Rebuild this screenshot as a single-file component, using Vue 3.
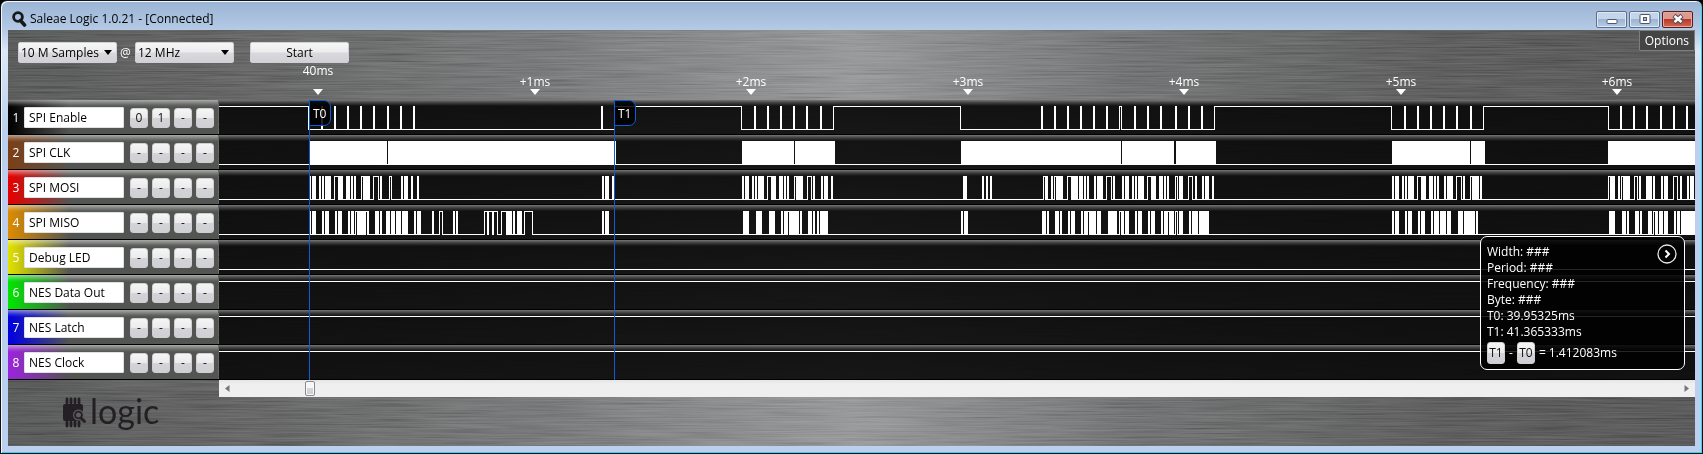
<script setup>
import { ref } from 'vue'

const depth = ref('10 M Samples')
const rate = ref('12 MHz')
const scroll = ref(69)

// Horizontal positions are measured from the window edge; the plots start here.
const ORIGIN = 219
const END = 2600

const ticks = ['40ms', '+1ms', '+2ms', '+3ms', '+4ms', '+5ms', '+6ms'].map((label, i) => ({
  label,
  x: Math.round(318 + i * 216.5) - ORIGIN
}))

const cursors = [
  { label: 'T0', x: 309 - ORIGIN },
  { label: 'T1', x: 614 - ORIGIN }
]

const pulses = (xs) => xs.map((x) => [x, 2])

// high: stretches drawn as an outline; fill: stretches too dense to resolve.
const channels = ref([
  {
    name: 'SPI Enable', color: '#000000', keys: ['0', '1', '-', '-'],
    high: [[ORIGIN - 2, 309], [614, 742], [833, 961], [1119, 1122], [1214, 1392], [1483, 1609]],
    fill: pulses([321, 334, 347, 360, 373, 387, 400, 413, 601, 754, 767, 780, 793, 806, 820,
      1041, 1054, 1067, 1080, 1093, 1106, 1134, 1147, 1160, 1175, 1188, 1201,
      1404, 1417, 1430, 1443, 1456, 1470, 1620, 1633, 1646, 1660, 1673, 1686])
  },
  {
    name: 'SPI CLK', color: '#7c3f16', keys: ['-', '-', '-', '-'], high: [],
    fill: [[309, 78], [388, 228], [742, 52], [795, 40], [961, 160], [1122, 52], [1176, 40],
      [1392, 78], [1471, 14], [1608, 87]]
  },
  {
    name: 'SPI MOSI', color: '#e60000', keys: ['-', '-', '-', '-'],
    high: [[334, 339], [361, 364], [373, 379], [389, 392], [767, 772], [794, 797], [807, 812],
      [1043, 1046], [1054, 1057], [1067, 1072], [1106, 1112], [1147, 1152], [1175, 1178],
      [1188, 1193], [1417, 1422], [1456, 1462], [1470, 1473], [1608, 1611], [1621, 1624],
      [1634, 1638], [1673, 1678]],
    fill: [[310, 1], [312, 4], [319, 2], [322, 2], [325, 6], [338, 5], [346, 4], [351, 2], [354, 2],
      [363, 7], [380, 2], [401, 2], [404, 4], [411, 2], [417, 2], [602, 2], [605, 4], [612, 2],
      [742, 2], [745, 4], [752, 2], [755, 2], [758, 6], [771, 5], [779, 4], [784, 2], [787, 2],
      [796, 7], [813, 2], [821, 2], [824, 4], [831, 2], [963, 4], [982, 2], [986, 2], [990, 2],
      [1045, 3], [1051, 2], [1056, 7], [1071, 7], [1079, 4], [1084, 2], [1087, 2], [1094, 2],
      [1097, 6], [1113, 2], [1122, 2], [1125, 4], [1132, 2], [1135, 2], [1138, 6], [1151, 5],
      [1159, 4], [1164, 2], [1167, 2], [1179, 4], [1195, 2], [1202, 2], [1205, 4], [1212, 2],
      [1392, 2], [1395, 4], [1402, 2], [1405, 2], [1408, 6], [1421, 5], [1429, 4], [1434, 2],
      [1437, 2], [1444, 2], [1447, 6], [1463, 2], [1472, 7], [1480, 2], [1610, 5], [1618, 2],
      [1623, 7], [1639, 2], [1646, 6], [1653, 2], [1661, 2], [1664, 4], [1680, 2], [1687, 2],
      [1690, 4]]
  },
  {
    name: 'SPI MISO', color: '#dc8c00', keys: ['-', '-', '-', '-'],
    high: [[355, 358], [365, 369], [396, 398], [439, 443], [484, 488], [487, 493], [492, 498],
      [501, 507], [524, 533], [787, 790], [795, 797], [1087, 1090], [1113, 1115], [1119, 1122],
      [1167, 1170], [1175, 1178], [1437, 1439], [1653, 1656]],
    fill: [[310, 1], [312, 4], [322, 2], [325, 4], [335, 2], [338, 4], [348, 2], [351, 3], [358, 8],
      [367, 2], [375, 4], [380, 2], [386, 4], [391, 4], [398, 3], [402, 6], [414, 2], [417, 4],
      [432, 2], [453, 2], [456, 2], [487, 2], [492, 2], [506, 6], [513, 2], [517, 5], [602, 2],
      [605, 4], [743, 6], [756, 6], [769, 6], [781, 2], [784, 3], [789, 6], [796, 3], [800, 2],
      [808, 4], [813, 2], [817, 2], [820, 8], [961, 2], [964, 4], [1042, 4], [1047, 2],
      [1055, 4], [1060, 2], [1068, 2], [1071, 4], [1081, 2], [1084, 3], [1090, 6], [1097, 4],
      [1108, 5], [1114, 3], [1122, 2], [1125, 4], [1135, 2], [1138, 4], [1148, 2], [1151, 4],
      [1161, 2], [1164, 3], [1170, 4], [1179, 4], [1189, 2], [1192, 6], [1199, 10], [1392, 2],
      [1395, 4], [1405, 2], [1408, 4], [1418, 2], [1421, 4], [1431, 2], [1434, 3], [1440, 6],
      [1447, 4], [1458, 5], [1464, 11], [1476, 2], [1609, 6], [1622, 4], [1627, 2], [1635, 4],
      [1640, 2], [1648, 4], [1655, 3], [1659, 4], [1664, 4], [1674, 2], [1677, 3], [1681, 14]]
  },
  { name: 'Debug LED', color: '#e1e100', keys: ['-', '-', '-', '-'], high: [], fill: [] },
  { name: 'NES Data Out', color: '#00e600', keys: ['-', '-', '-', '-'], high: [[ORIGIN - 2, END]], fill: [] },
  { name: 'NES Latch', color: '#0000e1', keys: ['-', '-', '-', '-'], high: [[ORIGIN - 2, END]], fill: [] },
  { name: 'NES Clock', color: '#9b23dc', keys: ['-', '-', '-', '-'], high: [[ORIGIN - 2, END]], fill: [] }
])

const TOP = 6
const LOW = 29

function trace(high) {
  let d = `M${ORIGIN - 4} ${LOW}.5`
  for (const [a, b] of [...high].sort((p, q) => p[0] - q[0])) {
    d += `H${a}.5V${TOP}.5H${b - 1}.5V${LOW}.5`
  }
  return `${d}H${END}`
}

const measurements = [
  'Width: ###', 'Period: ###', 'Frequency: ###', 'Byte: ###', 'T0: 39.95325ms', 'T1: 41.365333ms'
]
</script>

<template>
  <div class="window">
    <header class="titlebar">
      <svg class="app-icon" width="15" height="16" viewBox="0 0 15 16" aria-hidden="true">
        <circle cx="6" cy="6" r="4.4" fill="none" stroke="#17191c" stroke-width="2.8" />
        <path d="M8.5 9.5l4 4.5" stroke="#17191c" stroke-width="3.6" stroke-linecap="round" />
      </svg>
      <h1>Saleae Logic 1.0.21 - [Connected]</h1>
      <div class="window-buttons">
        <button type="button" aria-label="Minimize">
          <svg width="12" height="12" viewBox="0 0 12 12"><rect x="1" y="6.5" width="10" height="4" rx="1" fill="#fff" stroke="#50586a" /></svg>
        </button>
        <button type="button" aria-label="Maximize">
          <svg width="12" height="12" viewBox="0 0 12 12"><rect x="1" y="1.5" width="10" height="9" rx="1" fill="#fff" stroke="#50586a" /><rect x="4.5" y="4.5" width="3" height="3" fill="#9db8d8" stroke="#50586a" /></svg>
        </button>
        <button type="button" class="close" aria-label="Close">
          <svg width="14" height="12" viewBox="0 0 14 12"><path d="M3 2.5l8 7M11 2.5l-8 7" stroke="#4a4c5c" stroke-width="4.6" /><path d="M3.5 3l7 6M10.5 3l-7 6" stroke="#fff" stroke-width="2.6" /></svg>
        </button>
      </div>
    </header>

    <main class="client">
      <svg class="metal" aria-hidden="true">
        <filter id="brushed" x="0" y="0" width="100%" height="100%">
          <feTurbulence type="fractalNoise" baseFrequency="0.012 0.7" numOctaves="3" seed="8" />
          <feColorMatrix values="1 0 0 0 0  1 0 0 0 0  1 0 0 0 0  0 0 0 0 1" />
        </filter>
        <rect width="100%" height="100%" filter="url(#brushed)" />
      </svg>

      <div class="toolbar">
        <form class="capture" @submit.prevent>
          <span class="pick">
            <select v-model="depth" aria-label="Sample count">
              <option>10 M Samples</option>
              <option>25 M Samples</option>
            </select>
          </span>
          <span class="at">@</span>
          <span class="pick">
            <select v-model="rate" aria-label="Sample rate">
              <option>12 MHz</option>
              <option>24 MHz</option>
            </select>
          </span>
          <button class="start" type="submit">Start</button>
        </form>
        <button class="options" type="button">Options</button>
      </div>

      <div class="ruler">
        <div
          v-for="(t, i) in ticks"
          :key="t.label"
          class="tick"
          :class="{ major: i === 0 }"
          :style="{ left: t.x + 'px' }"
        >
          <span>{{ t.label }}</span><i></i>
        </div>
      </div>

      <section class="channels">
        <div v-for="(c, i) in channels" :key="i" class="channel">
          <div class="label">
            <svg class="tint" aria-hidden="true">
              <defs>
                <linearGradient :id="'tint' + i">
                  <stop offset="0" :stop-color="c.color" />
                  <stop offset="0.12" :stop-color="c.color" stop-opacity="0.9" />
                  <stop offset="1" :stop-color="c.color" stop-opacity="0" />
                </linearGradient>
              </defs>
              <rect width="62" height="100%" :fill="`url(#tint${i})`" />
            </svg>
            <label :for="'name' + i">{{ i + 1 }}</label>
            <input :id="'name' + i" v-model="c.name" type="text">
            <div class="keys">
              <button v-for="(k, j) in c.keys" :key="j" type="button">{{ k }}</button>
            </div>
          </div>
          <svg class="plot" :aria-label="c.name">
            <g :transform="`translate(${-ORIGIN} 0)`" shape-rendering="crispEdges">
              <path :d="trace(c.high)" fill="none" stroke="#fff" />
              <rect v-for="[x, w] in c.fill" :key="x" :x="x" :y="TOP" :width="w" :height="LOW - TOP + 1" fill="#fff" />
            </g>
          </svg>
        </div>

        <div class="overlay">
          <div v-for="c in cursors" :key="c.label" class="cursor" :style="{ left: c.x + 'px' }">
            <span>{{ c.label }}</span>
          </div>
          <aside class="panel">
            <p v-for="m in measurements" :key="m">{{ m }}</p>
            <div class="delta">
              <button type="button">T1</button><span>-</span><button type="button">T0</button><span>= 1.412083ms</span>
            </div>
            <button class="expand" type="button" aria-label="More measurements">
              <svg width="20" height="20" viewBox="0 0 20 20"><circle cx="10" cy="10" r="9" fill="#000" stroke="#e8e8e8" stroke-width="1.3" /><path d="M8.5 6.5l3.5 3.5-3.5 3.5" fill="none" stroke="#fff" stroke-width="2" /></svg>
            </button>
          </aside>
        </div>
      </section>

      <div class="scrollbar">
        <button type="button" aria-label="Scroll left"><svg width="5" height="7" viewBox="0 0 5 7"><path d="M4.5 0v7L0 3.5z" fill="#77777b" /></svg></button>
        <input v-model="scroll" type="range" min="0" max="1432" aria-label="Timeline position">
        <button type="button" aria-label="Scroll right"><svg width="5" height="7" viewBox="0 0 5 7"><path d="M.5 0v7L5 3.5z" fill="#77777b" /></svg></button>
      </div>

      <footer class="brand">
        <svg width="24" height="31" viewBox="0 0 24 31" aria-hidden="true">
          <path d="M4 2v4M8 2v4M12 2v4M16 2v4M4 25v4M8 25v4M12 25v4M16 25v4" stroke="#231f24" stroke-width="2.8" stroke-linecap="round" />
          <rect x="0" y="7" width="20" height="17" rx="2" fill="#231f24" />
          <path d="M18.5 21l3.5 3.5" stroke="#5c5d5c" stroke-width="5" stroke-linecap="round" />
          <circle cx="15.5" cy="18" r="5.5" fill="#5c5d5c" />
          <circle cx="15.5" cy="18" r="3.4" fill="none" stroke="#231f24" stroke-width="1.8" />
          <path d="M18 21l3.5 3.5" stroke="#231f24" stroke-width="2.8" stroke-linecap="round" />
        </svg>
        <span>logic</span>
      </footer>
    </main>
  </div>
</template>

<style>
body {
  background: #000;
}
</style>

<style scoped>
.window {
  box-sizing: border-box;
  padding: 0 6px 6px;
  border: 1px solid #10141a;
  border-radius: 7px 7px 0 0;
  background: linear-gradient(#9ab4d4, #b5cbe6 30px, #dbe8f7 50px, #bbd0ee 130px);
  box-shadow: inset 1px 1px #f3f8fd, inset -1px -1px #32d6f0;
  font: 12px/16px "Open Sans", "Noto Sans", sans-serif;
  color: #fff;
}
button,
input,
select {
  margin: 0;
  font: inherit;
}
.titlebar {
  display: flex;
  align-items: center;
  height: 29px;
  padding: 0 3px 0 5px;
}
.app-icon {
  margin-top: 6px;
}
h1 {
  flex: 1;
  margin: 6px 0 0 3px;
  font-size: 12px;
  font-weight: 400;
  color: #000;
}
.window-buttons {
  display: flex;
  gap: 2px;
  margin-top: 7px;
}
.window-buttons button {
  display: grid;
  place-items: center;
  box-sizing: border-box;
  width: 31px;
  height: 17px;
  padding: 0;
  border: 1px solid #5a6f8f;
  border-radius: 2px;
  background: linear-gradient(#c4d5ea 45%, #9cb5d3 50%, #b7cce6);
  box-shadow: inset 0 0 0 1px #dfe9f5;
}
.window-buttons .close {
  border-color: #5b1a1e;
  background: linear-gradient(#dd9a8e 45%, #b8392a 50%, #cf6a51);
  box-shadow: inset 0 0 0 1px #e6a99f;
}
.client {
  position: relative;
  overflow: hidden;
  margin: 0 1px 1px;
  background: linear-gradient(90deg, #4d4f4e, #565756 12%, #6d6e6f 32%, #8c8e90 50%, #68696a 66%, #515251 84%, #4c4d4c);
}
.metal {
  position: absolute;
  inset: 0;
  width: 100%;
  height: 100%;
  opacity: 0.5;
  mix-blend-mode: soft-light;
}
.toolbar,
.ruler,
.channels,
.scrollbar,
.brand {
  position: relative;
}
.toolbar {
  display: flex;
  justify-content: space-between;
  align-items: flex-start;
  height: 34px;
}
.capture {
  display: flex;
  align-items: center;
  padding: 12px 0 0 10px;
}
.pick {
  position: relative;
  width: 98px;
}
.pick::after {
  content: "";
  position: absolute;
  right: 4px;
  top: 8px;
  border: 4px solid transparent;
  border-top: 5px solid #000;
  border-bottom: 0;
  pointer-events: none;
}
.pick select,
.start {
  display: block;
  box-sizing: border-box;
  height: 21px;
  border: 1px solid #d0d0d4;
  border-radius: 2px;
  background: linear-gradient(#f6f6f6, #ececee 48%, #d9d9dd 52%, #d2d2d6);
  color: #000;
}
.pick select {
  appearance: none;
  width: 99px;
  padding: 0 0 0 2px;
}
.at {
  width: 19px;
  text-align: center;
}
.start {
  width: 99px;
  margin-left: 17px;
  padding: 0;
}
.options {
  box-sizing: border-box;
  height: 21px;
  padding: 0 5px;
  border: 1px solid #7d7e7d;
  border-radius: 1px;
  background: #434443;
  color: #fff;
}
.ruler {
  height: 36px;
  margin-left: 211px;
}
.tick {
  position: absolute;
  top: 10px;
  width: 60px;
  margin-left: -30px;
  text-align: center;
}
.tick i {
  display: block;
  width: 0;
  margin: -1px auto 0;
  border: 5px solid transparent;
  border-top: 6px solid #fff;
  border-bottom: 0;
}
.tick.major {
  top: -1px;
}
.tick.major i {
  margin-top: 10px;
}
.channel {
  display: flex;
  box-sizing: border-box;
  height: 35px;
  border-bottom: 1px solid #000;
}
.label {
  position: relative;
  display: flex;
  align-items: center;
  box-sizing: border-box;
  width: 210px;
  margin-right: 1px;
  padding-top: 1px;
  background: #535552;
}
.label::after {
  content: "";
  position: absolute;
  inset: 0 0 auto;
  height: 7px;
  background: linear-gradient(rgba(255, 255, 255, 0.5), rgba(255, 255, 255, 0.1) 70%, transparent);
}
.tint {
  position: absolute;
  inset: 0;
  width: 100%;
  height: 100%;
}
.label label {
  position: relative;
  width: 16px;
  text-align: center;
}
.label input {
  position: relative;
  z-index: 1;
  box-sizing: border-box;
  width: 100px;
  height: 21px;
  padding: 0 0 0 4px;
  border: 1px solid #dfe1e4;
  border-radius: 1px;
  background: #fff;
  color: #000;
}
.keys {
  position: relative;
  z-index: 1;
  display: flex;
  gap: 4px;
  margin-left: 6px;
}
.keys button,
.delta button {
  box-sizing: border-box;
  width: 18px;
  height: 20px;
  padding: 0;
  border: 1px solid #cfcfd3;
  border-radius: 3px;
  background: linear-gradient(#f5f5f5, #ebebed 48%, #d4d4d8 52%, #d0d0d4);
  color: #111;
}
.plot {
  flex: 1;
  min-width: 0;
  height: 34px;
  background: linear-gradient(#777, #4c4d4c 2px, #2c2d2c 4px, rgba(8, 9, 8, 0.93) 6px, rgba(8, 9, 8, 0.9));
}
.overlay {
  position: absolute;
  inset: 0 0 0 211px;
  pointer-events: none;
}
.cursor {
  position: absolute;
  top: 0;
  bottom: 0;
  border-left: 1px solid #0a5fd8;
}
.cursor span {
  display: block;
  box-sizing: border-box;
  width: 22px;
  height: 26px;
  margin-left: -1px;
  padding-left: 3px;
  border: 1px solid #0a5fd8;
  border-radius: 0 7px 7px 0;
  background: rgba(0, 0, 0, 0.85);
  line-height: 25px;
}
.panel {
  position: absolute;
  right: 10px;
  bottom: 10px;
  box-sizing: border-box;
  width: 205px;
  padding: 7px 6px 5px;
  border: 1px solid #fff;
  border-radius: 7px;
  background: rgba(0, 0, 0, 0.85);
  pointer-events: auto;
}
.panel p {
  margin: 0;
}
.delta {
  display: flex;
  align-items: center;
  gap: 4px;
  margin-top: 2px;
}
.delta button {
  height: 22px;
}
.expand {
  position: absolute;
  top: 7px;
  right: 7px;
  width: 20px;
  height: 20px;
  padding: 0;
  border: 0;
  background: none;
}
.expand svg {
  display: block;
}
.scrollbar {
  display: flex;
  height: 17px;
  margin-left: 211px;
  background: linear-gradient(#e6e4e5, #efefef 4px);
}
.scrollbar button {
  display: grid;
  place-items: center;
  width: 17px;
  padding: 0;
  border: 0;
  background: none;
}
.scrollbar input {
  appearance: none;
  flex: 1;
  min-width: 0;
  height: 17px;
  background: none;
}
.scrollbar input::-webkit-slider-thumb {
  appearance: none;
  box-sizing: border-box;
  width: 10px;
  height: 15px;
  border: 1px solid #88898c;
  border-radius: 2px;
  background: linear-gradient(#f7f7f7 45%, #d6d7da 50%, #cbccd0);
  box-shadow: inset 0 0 0 1px #fafafa;
}
.brand {
  display: flex;
  align-items: flex-start;
  gap: 3px;
  padding: 0 0 18px 55px;
  color: #231f24;
}
.brand span {
  font: 400 34px/28px Lato, "Open Sans", sans-serif;
}
</style>
